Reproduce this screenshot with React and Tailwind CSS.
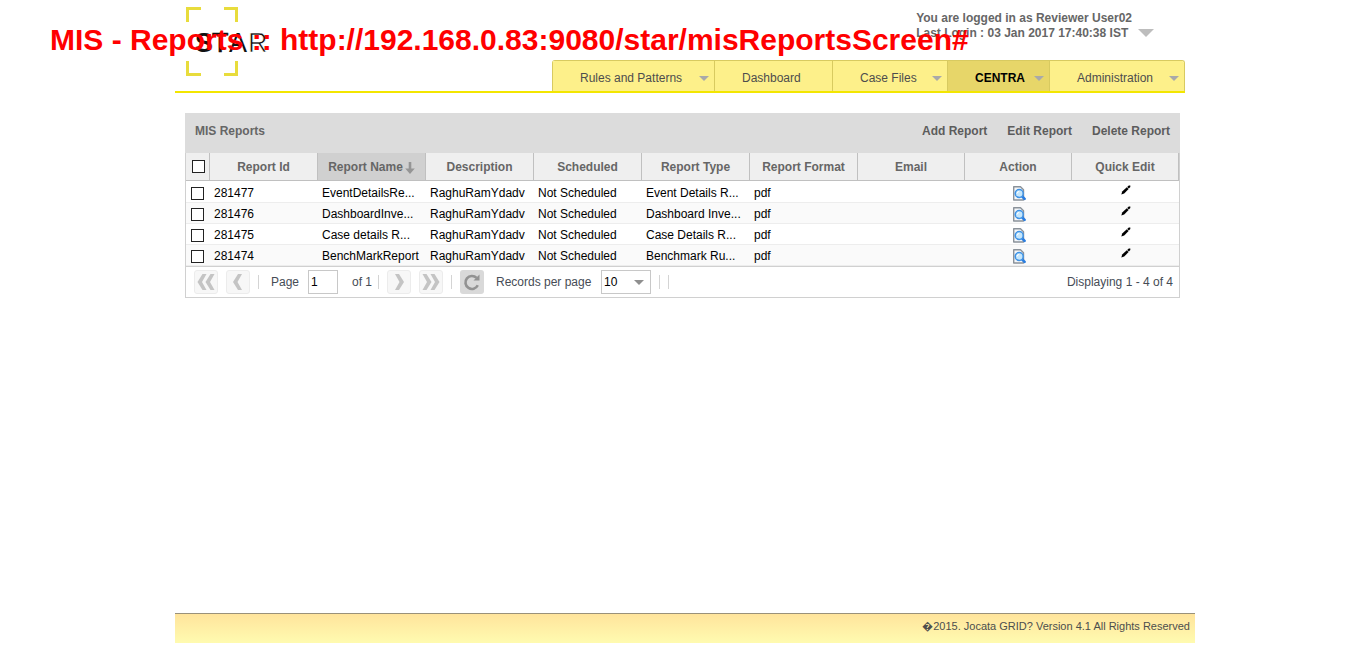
import React from "react";

const tabs = [
  { label: "Rules and Patterns", width: "w-[162px]", menu: true },
  { label: "Dashboard", width: "w-[118px]" },
  { label: "Case Files", width: "w-[115px]", menu: true },
  { label: "CENTRA", width: "w-[102px]", menu: true, active: true },
  { label: "Administration", width: "w-[135px]", menu: true },
];

const columns = [
  { label: "Report Id", width: "w-[108px]" },
  { label: "Report Name", width: "w-[108px]", sorted: true },
  { label: "Description", width: "w-[108px]" },
  { label: "Scheduled", width: "w-[108px]" },
  { label: "Report Type", width: "w-[108px]" },
  { label: "Report Format", width: "w-[108px]" },
  { label: "Email", width: "w-[107px]" },
  { label: "Action", width: "w-[107px]" },
  { label: "Quick Edit", width: "w-[107px]" },
];

const rows = [
  { id: "281477", name: "EventDetailsRe...", type: "Event Details R..." },
  { id: "281476", name: "DashboardInve...", type: "Dashboard Inve..." },
  { id: "281475", name: "Case details R...", type: "Case Details R..." },
  { id: "281474", name: "BenchMarkReport", type: "Benchmark Ru..." },
];

function Caret({ className }) {
  return (
    <svg viewBox="0 0 10 5" preserveAspectRatio="none" className={className} aria-hidden="true">
      <path d="M0 0H10L5 5Z" fill="currentColor" />
    </svg>
  );
}

function Logo() {
  return (
    <svg width="84" height="70" viewBox="0 0 84 70" className="block" role="img" aria-label="STAR">
      <path
        d="M1.5 15V1.5H15M38 1.5H50.5V15M50.5 54V67.5H38M15 67.5H1.5V54"
        fill="none"
        stroke="#e8dc3c"
        strokeWidth="3"
      />
      <g fontFamily="'Liberation Sans', Arial, sans-serif" fontSize="27" fill="#111">
        <text x="9" y="45" fontWeight="700">S</text>
        <text x="26" y="45" stroke="#111" strokeWidth="0.6">T</text>
        <text x="43" y="45">A</text>
        <text x="62" y="45" stroke="#fff" strokeWidth="0.7">R</text>
      </g>
    </svg>
  );
}

function SortArrow() {
  return (
    <svg width="10" height="12" viewBox="0 0 10 12" aria-hidden="true">
      <path d="M3.7 0H6.3V6.5H9.8L5 12L0.2 6.5H3.7Z" fill="#959595" />
    </svg>
  );
}

function PreviewIcon() {
  return (
    <svg width="14" height="15" viewBox="0 0 14 15" className="block" aria-hidden="true">
      <path d="M1.7 0.8H8.5L11.5 3.8V14H1.7Z" fill="#f4f6f8" stroke="#8a929a" strokeWidth="1.4" strokeLinejoin="round" />
      <path d="M9.8 10L12.6 12.8" stroke="#2a7de0" strokeWidth="2.6" strokeLinecap="round" />
      <circle cx="7.2" cy="7.5" r="4" fill="#c5e6fb" stroke="#3d92e6" strokeWidth="1.5" />
      <path d="M5.2 7.4A2.2 2.2 0 0 1 7.2 5.4" fill="none" stroke="#fff" />
    </svg>
  );
}

function PencilIcon() {
  return (
    <svg width="10" height="10" viewBox="0 0 10 10" className="block" aria-hidden="true">
      <path d="M0.3 9.5L1.2 6.6L5.8 2.2L7.6 4L3.2 8.6Z" fill="#000" />
      <path d="M6.2 1.9L7.8 0.5H9.3V2.1L7.9 3.6Z" fill="#000" />
    </svg>
  );
}

function Chevrons({ double, flip }) {
  return (
    <svg
      width="18"
      height="16"
      viewBox="0 0 18 16"
      className={flip ? "rotate-180" : undefined}
      aria-hidden="true"
    >
      <g fill="#c4c4c4">
        {double ? (
          <>
            <path d="M5.5 0H9.5L5 8L9.5 16H5.5L0.5 8Z" />
            <path d="M13.5 0H17.5L13 8L17.5 16H13.5L8.5 8Z" />
          </>
        ) : (
          <path d="M9 0H13L8.5 8L13 16H9L4 8Z" />
        )}
      </g>
    </svg>
  );
}

function PagerButton({ label, double, flip, className = "" }) {
  return (
    <button
      type="button"
      aria-label={label}
      className={`flex size-6 items-center justify-center rounded-[3px] border border-[#ececec] bg-[#f7f7f7] ${className}`}
    >
      <Chevrons double={double} flip={flip} />
    </button>
  );
}

function Divider({ className = "" }) {
  return <span className={`h-3.5 w-px bg-[#d4d4d4] ${className}`} />;
}

function Check({ label }) {
  return (
    <input
      type="checkbox"
      aria-label={label}
      className="block size-[13px] appearance-none border border-[#222] bg-white checked:bg-[#666]"
    />
  );
}

export default function App() {
  return (
    <div className="relative min-h-screen bg-white font-['Liberation_Sans',Arial,sans-serif] text-[12px] leading-[15px] text-black">
      <div className="mx-auto flex min-h-screen max-w-[1041px] flex-col pb-[15px] pl-[21px]">
        <header className="mr-2.5 flex min-h-[93px] justify-between border-b-2 border-[#f3e600]">
          <div className="pt-[7px] pl-[11px]">
            <Logo />
          </div>
          <div className="flex flex-col items-end justify-between pt-[11px]">
            <div className="flex items-end gap-1.5 pr-[31px] font-bold text-[#666]">
              <p>
                You are logged in as Reviewer User02
                <br />
                Last Login : 03 Jan 2017 17:40:38 IST
              </p>
              <button type="button" aria-label="Account menu" className="pb-1 text-[#bdbdbd]">
                <Caret className="block h-2 w-4" />
              </button>
            </div>
            <nav className="flex h-[31px] overflow-hidden rounded-t-[3px] border-t border-r border-[#d8ca60]">
              {tabs.map((tab) => (
                <a
                  key={tab.label}
                  href="#"
                  className={`flex items-center justify-between border-l border-[#d8ca60] pt-1 pr-[5px] pl-[27px] whitespace-nowrap ${tab.width} ${
                    tab.active ? "bg-[#e7d669] font-bold text-black" : "bg-[#fdf08a] text-[#4d4d4d]"
                  }`}
                >
                  {tab.label}
                  {tab.menu && <Caret className="h-[5px] w-2.5 text-[#a9a9a9]" />}
                </a>
              ))}
            </nav>
          </div>
        </header>

        <main className="mt-5 mr-[15px] ml-2.5 grow">
          <div className="flex h-10 items-center justify-between bg-[#dcdcdc] px-2.5 pb-1 font-bold text-[#666]">
            <h1>MIS Reports</h1>
            <div className="flex gap-5 text-[#5c5c5c]">
              <button type="button">Add Report</button>
              <button type="button">Edit Report</button>
              <button type="button">Delete Report</button>
            </div>
          </div>

          <div className="border border-t-0 border-[#d0d0d0]">
            <table className="w-full table-fixed border-separate border-spacing-0">
              <thead>
                <tr className="h-7 bg-[#efefef] text-[#666]">
                  <th className="w-6 border-r border-b border-[#c0c0c0] p-0 pl-1.5">
                    <Check label="Select all reports" />
                  </th>
                  {columns.map((col) => (
                    <th
                      key={col.label}
                      className={`border-r border-b border-[#c0c0c0] p-0 pt-0.5 font-bold ${col.width} ${
                        col.sorted ? "bg-[#d0d0d0]" : ""
                      }`}
                    >
                      <span className="inline-flex items-center gap-0.5">
                        {col.label}
                        {col.sorted && <SortArrow />}
                      </span>
                    </th>
                  ))}
                </tr>
              </thead>
              <tbody className="[&_td]:border-b [&_td]:border-[#ededed] [&_td]:p-0 [&_td]:pb-px [&_td]:align-bottom [&_td]:whitespace-nowrap">
                {rows.map((row) => (
                  <tr key={row.id} className="h-[21px] first:h-[22px] even:bg-[#fafafa]">
                    <td>
                      <div className="pb-px pl-[5px]">
                        <Check label={`Select report ${row.id}`} />
                      </div>
                    </td>
                    <td><div className="pl-1">{row.id}</div></td>
                    <td><div className="pl-1">{row.name}</div></td>
                    <td><div className="pl-1">RaghuRamYdadv</div></td>
                    <td><div className="pl-1">Not Scheduled</div></td>
                    <td><div className="pl-1">{row.type}</div></td>
                    <td><div className="pl-1">pdf</div></td>
                    <td></td>
                    <td>
                      <div className="flex justify-center">
                        <button type="button" aria-label={`View report ${row.id}`}>
                          <PreviewIcon />
                        </button>
                      </div>
                    </td>
                    <td>
                      <div className="flex justify-center pb-1.5">
                        <button type="button" aria-label={`Edit report ${row.id}`}>
                          <PencilIcon />
                        </button>
                      </div>
                    </td>
                  </tr>
                ))}
              </tbody>
            </table>

            <div className="flex h-[31px] items-center border-t border-[#d0d0d0] pr-1.5 pl-2 text-[#464c55]">
              <PagerButton label="First page" double />
              <PagerButton label="Previous page" className="ml-2" />
              <Divider className="ml-2" />
              <label htmlFor="page" className="ml-3 w-[37px]">
                Page
              </label>
              <input
                id="page"
                defaultValue="1"
                className="h-6 w-[30px] border border-[#c8c8c8] bg-white px-0.5 text-black"
              />
              <span className="ml-3.5 w-[26px] whitespace-nowrap">of 1</span>
              <Divider />
              <PagerButton label="Next page" flip className="ml-2" />
              <PagerButton label="Last page" double flip className="ml-2" />
              <Divider className="ml-2" />
              <button
                type="button"
                aria-label="Refresh"
                className="ml-2 flex size-6 items-center justify-center rounded-[3px] bg-[#d9d9d9]"
              >
                <svg width="18" height="18" viewBox="0 0 18 18" aria-hidden="true">
                  <path
                    d="M13.6 4.9A6.5 6.5 0 1 0 14.8 12.3"
                    fill="none"
                    stroke="#929292"
                    strokeWidth="2.6"
                  />
                  <path d="M16.5 1.5V7.5H10.5Z" fill="#929292" />
                </svg>
              </button>
              <label htmlFor="page-size" className="ml-3 w-[105px] whitespace-nowrap">
                Records per page
              </label>
              <div className="relative">
                <select
                  id="page-size"
                  defaultValue="10"
                  className="block h-6 w-[50px] appearance-none border border-[#c8c8c8] bg-white pl-0.5 text-black"
                >
                  <option>10</option>
                  <option>20</option>
                  <option>50</option>
                </select>
                <Caret className="pointer-events-none absolute top-[10px] right-[7px] h-[5px] w-2.5 text-[#8f8f8f]" />
              </div>
              <Divider className="ml-2" />
              <Divider className="ml-2" />
              <span className="ml-auto">Displaying 1 - 4 of 4</span>
            </div>
          </div>
        </main>

        <footer className="h-[30px] border-t border-[#99917a] bg-linear-to-b from-[#ffe49c] to-[#fffbb0] pt-[5px] pr-[5px] text-right text-[11px] text-[#4d4d4d]">
          {"\uFFFD"}2015. Jocata GRID? Version 4.1 All Rights Reserved
        </footer>
      </div>

      <p className="pointer-events-none absolute top-5 left-[50px] text-[30px] leading-10 font-bold whitespace-nowrap text-[#ff0000]">
        MIS - Reports :: http://192.168.0.83:9080/star/misReportsScreen#
      </p>
    </div>
  );
}
